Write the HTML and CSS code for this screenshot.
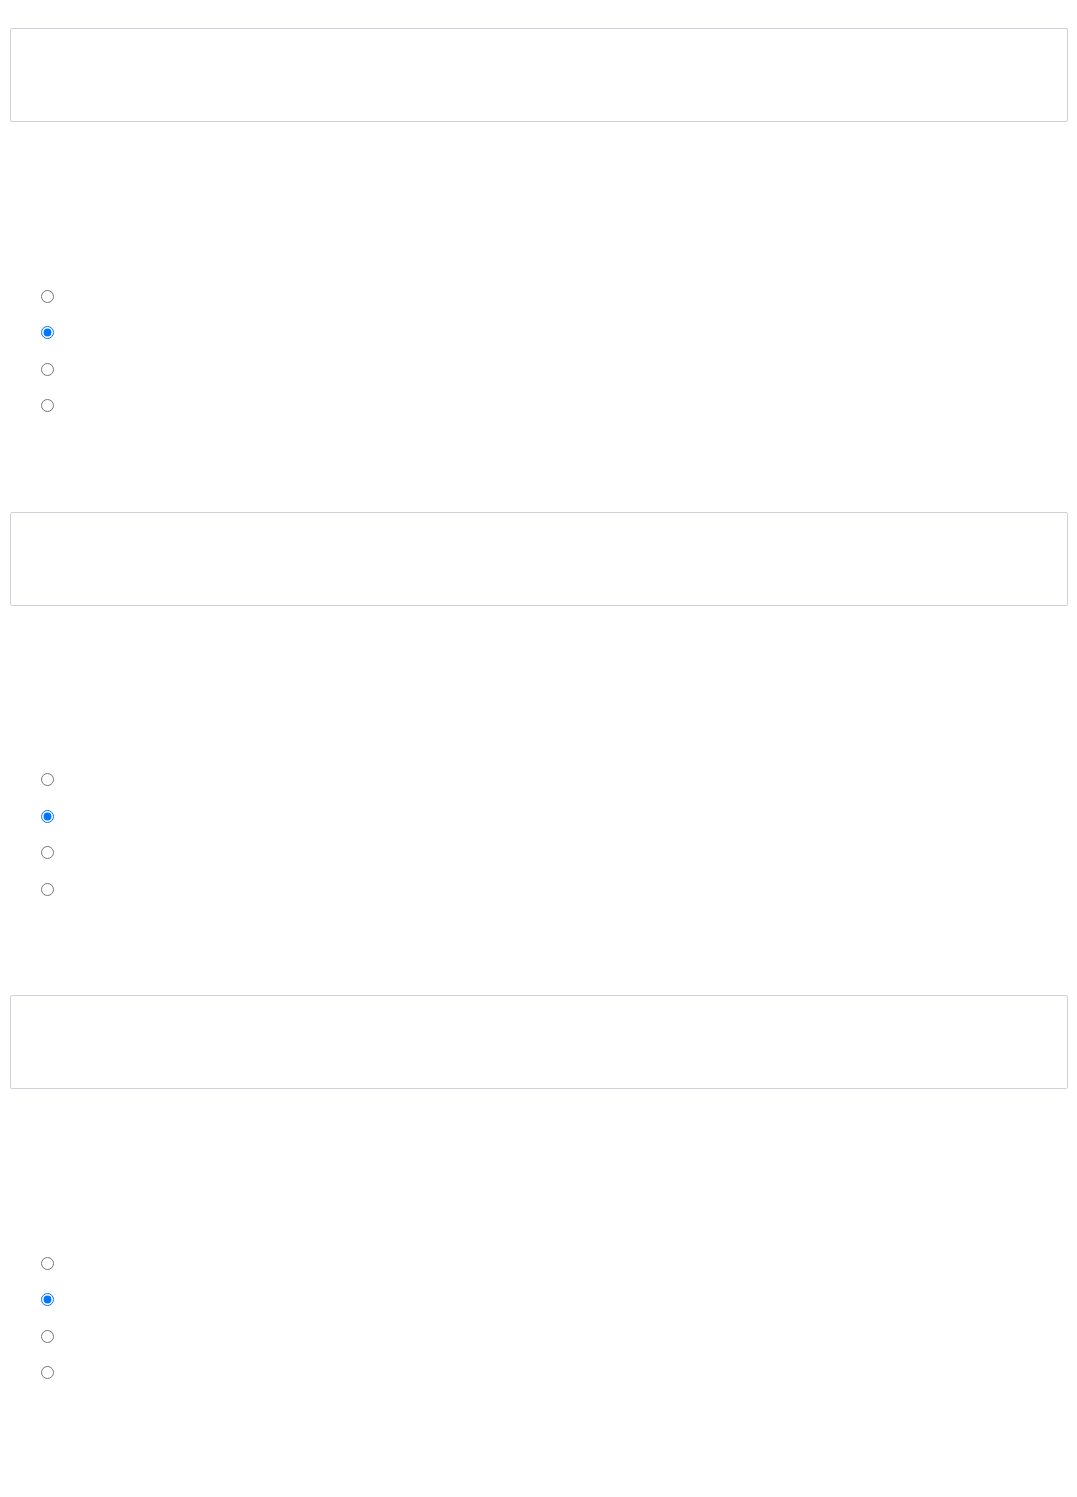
FILE: index.html
```html
<!DOCTYPE html>
<html lang="en">
<head>
    <meta charset="UTF-8">
    <meta name="viewport" content="width=device-width, initial-scale=1.0">
    <title>Quiz</title>
    <link rel="stylesheet" href="styles.css">
</head>
<body>
    <main class="quiz">
        <section class="question">
            <div class="question-box"></div>
            <div class="options">
                <label class="option"><input type="radio" name="q1"></label>
                <label class="option"><input type="radio" name="q1" checked></label>
                <label class="option"><input type="radio" name="q1"></label>
                <label class="option"><input type="radio" name="q1"></label>
            </div>
        </section>

        <section class="question">
            <div class="question-box"></div>
            <div class="options">
                <label class="option"><input type="radio" name="q2"></label>
                <label class="option"><input type="radio" name="q2" checked></label>
                <label class="option"><input type="radio" name="q2"></label>
                <label class="option"><input type="radio" name="q2"></label>
            </div>
        </section>

        <section class="question">
            <div class="question-box"></div>
            <div class="options">
                <label class="option"><input type="radio" name="q3"></label>
                <label class="option"><input type="radio" name="q3" checked></label>
                <label class="option"><input type="radio" name="q3"></label>
                <label class="option"><input type="radio" name="q3"></label>
            </div>
        </section>
    </main>
</body>
</html>
```

FILE: styles.css
```css
body {
    font-family: "Liberation Sans", Arial, sans-serif;
    margin: 0;
    padding: 0;
    background: #fff;
}

.quiz {
    padding: 28px 9px 0 10px;
}

.question {
    display: flex;
    flex-direction: column;
    padding-bottom: 87.5px;
}

.question-box {
    height: 94px;
    box-sizing: border-box;
    border: 1px solid #ccd2dc;
    border-radius: 2px;
}

.options {
    display: flex;
    flex-direction: column;
    margin-top: 156px;
    padding-left: 31px;
}

.option {
    display: flex;
    align-items: center;
    height: 36.5px;
}

.option input {
    margin: 0;
}
```
